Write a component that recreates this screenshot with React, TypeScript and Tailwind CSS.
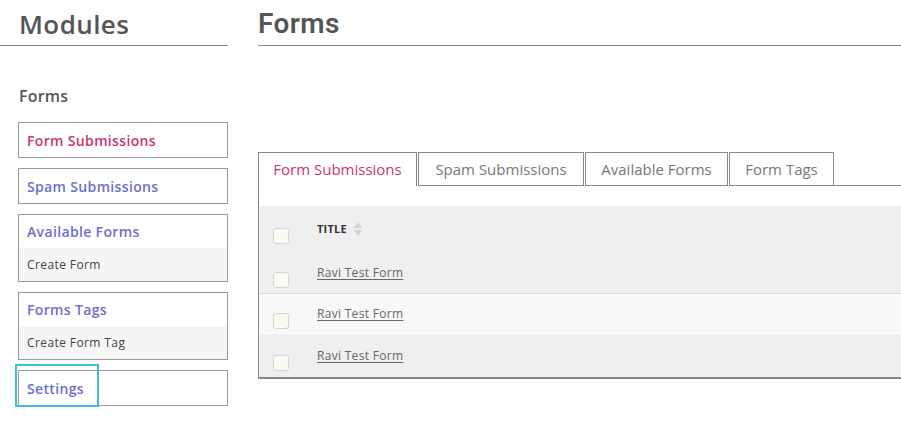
import type { FC, ReactNode } from "react";

const font = "font-['Open_Sans','Noto_Sans',sans-serif]";

const SideBox: FC<{ label: string; active?: boolean; sub?: string; focus?: boolean }> = ({
  label,
  active,
  sub,
  focus,
}) => (
  <div className="relative w-[210px] border border-[#999]">
    <div
      className={`flex items-center px-[8px] text-[14px] font-semibold tracking-[0.35px] ${
        sub ? "h-[33px]" : "h-[34px]"
      } ${active ? "text-[#c9356e]" : "text-[#6a70cc]"}`}
    >
      {label}
    </div>
    {sub && (
      <div className="flex h-[33px] items-center bg-[#f5f5f5] px-[8px] text-[12px] tracking-[0.4px] text-[#444]">
        {sub}
      </div>
    )}
    {focus && (
      <span className="absolute left-[-4px] top-[-7px] h-[43px] w-[84px] border-2 border-[#3dbfcf]" />
    )}
  </div>
);

const Check: FC = () => (
  <span className="mt-[14px] block h-[16px] w-[16px] rounded-[3px] border border-[#d4d4d4] bg-[#fbfbf1]" />
);

const Row: FC<{ className: string; children: ReactNode }> = ({ className, children }) => (
  <div className={`flex items-center ${className}`}>
    <div className="w-[58px] pl-[14px]">
      <Check />
    </div>
    {children}
  </div>
);

const tabs = [
  { label: "Form Submissions", w: "w-[159px]" },
  { label: "Spam Submissions", w: "w-[166px]" },
  { label: "Available Forms", w: "w-[143px]" },
  { label: "Form Tags", w: "w-[105px]" },
];

const linkCls = "text-[12px] leading-[16px] tracking-[0.3px] text-[#666] underline underline-offset-2";

export default function App() {
  return (
    <div className={`flex h-[425px] w-[901px] overflow-hidden bg-white ${font}`}>
      <aside className="w-[228px] shrink-0">
        <h2 className="border-b border-[#888] pb-[5px] pl-[19px] pt-[8px] text-[26px] font-semibold leading-[32px] tracking-[0.4px] text-[#555]">
          Modules
        </h2>
        <h3 className="mt-[38px] pl-[19px] text-[16px] font-semibold leading-[24px] tracking-[0.2px] text-[#555]">
          Forms
        </h3>
        <div className="mt-[14px] flex flex-col gap-[10px] pl-[18px]">
          <SideBox label="Form Submissions" active />
          <SideBox label="Spam Submissions" />
          <SideBox label="Available Forms" sub="Create Form" />
          <SideBox label="Forms Tags" sub="Create Form Tag" />
          <SideBox label="Settings" focus />
        </div>
      </aside>

      <main className="ml-[30px] flex-1">
        <h1 className="border-b border-[#888] pb-[5px] pt-[8px] font-['Roboto',sans-serif] text-[28px] font-semibold leading-[32px] tracking-[0.4px] text-[#555]">
          Forms
        </h1>

        <div className="mt-[106px] flex h-[34px]">
          {tabs.map((t, i) => (
            <div
              key={t.label}
              className={`flex items-center justify-center border-[#888] text-[15px] ${t.w} ${
                i === 0 ? "border-x border-t text-[#c9356e]" : "ml-[1px] border text-[#777]"
              }`}
            >
              {t.label}
            </div>
          ))}
          <div className="flex-1 border-b border-[#888]" />
        </div>

        <div className="border-b-2 border-l border-[#888] pt-[20px]">
          <Row className="h-[46px] bg-[#efefef]">
            <span className="text-[11px] font-bold leading-[16px] tracking-[0.2px] text-[#333]">TITLE</span>
            <svg width="10" height="16" viewBox="0 0 10 16" className="ml-[6px]">
              <path d="M5 1 L9 7 L1 7 Z" fill="#d2d2d2" />
              <path d="M5 15 L9 9 L1 9 Z" fill="#d2d2d2" />
            </svg>
          </Row>
          <Row className="h-[41px] bg-[#efefef]">
            <a className={linkCls}>Ravi Test Form</a>
          </Row>
          <Row className="h-[40px] border-t border-[#dcdcdc] bg-[#f8f8f8]">
            <a className={linkCls}>Ravi Test Form</a>
          </Row>
          <Row className="h-[44px] border-t border-[#fbfbfb] bg-[#efefef]">
            <a className={linkCls}>Ravi Test Form</a>
          </Row>
        </div>
      </main>
    </div>
  );
}
